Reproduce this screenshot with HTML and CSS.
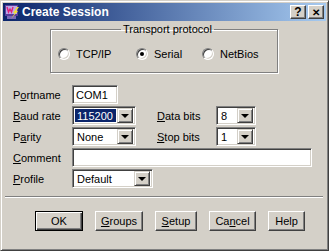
FILE: index.html
```html
<!DOCTYPE html>
<html lang="en">
<head>
    <meta charset="UTF-8">
    <title>Create Session</title>
    <link rel="stylesheet" href="styles.css">
</head>
<body>
    <div class="window">
        <div class="titlebar">
            <svg class="app-icon" width="16" height="16" viewBox="0 0 16 16">
                <rect x="1" y="1" width="13" height="11" fill="#5a3c9c"/>
                <rect x="2" y="2" width="11" height="8" fill="#b8a8e8"/>
                <polyline points="3,3 4.5,8 6,5 7.5,8 9,3" fill="none" stroke="#e0207a" stroke-width="1.4"/>
                <rect x="3" y="12" width="9" height="3" fill="#7868b8"/>
                <polygon points="13,3 9,9 11,9 7,15 14,7 12,7 15,3" fill="#f0e030"/>
            </svg>
            <span class="title">Create Session</span>
            <button class="cap-btn">?</button>
            <button class="cap-btn cap-close">&#x2715;</button>
        </div>
        <div class="client">
            <fieldset class="group">
                <legend>Transport protocol</legend>
                <div class="radios">
                    <label class="radio radio-tcp"><span class="radio-mark"></span>TCP/IP</label>
                    <label class="radio radio-serial"><span class="radio-mark checked"></span>Serial</label>
                    <label class="radio"><span class="radio-mark"></span>NetBios</label>
                </div>
            </fieldset>

            <div class="form">
                <span class="label">P<u>o</u>rtname</span>
                <div class="field span-3"><div class="edit edit-port">COM1</div></div>

                <span class="label"><u>B</u>aud rate</span>
                <div class="field">
                    <div class="combo combo-baud"><span class="combo-text selected">115200</span><span class="combo-arrow"></span></div>
                </div>
                <span class="label"><u>D</u>ata bits</span>
                <div class="field">
                    <div class="combo combo-small"><span class="combo-text">8</span><span class="combo-arrow"></span></div>
                </div>

                <span class="label">P<u>a</u>rity</span>
                <div class="field">
                    <div class="combo combo-baud"><span class="combo-text">None</span><span class="combo-arrow"></span></div>
                </div>
                <span class="label"><u>S</u>top bits</span>
                <div class="field">
                    <div class="combo combo-small"><span class="combo-text">1</span><span class="combo-arrow"></span></div>
                </div>

                <span class="label"><u>C</u>omment</span>
                <div class="field span-3"><div class="edit edit-wide"></div></div>

                <span class="label"><u>P</u>rofile</span>
                <div class="field span-3">
                    <div class="combo combo-profile"><span class="combo-text">Default</span><span class="combo-arrow"></span></div>
                </div>
            </div>

            <div class="separator"></div>

            <div class="buttons">
                <button class="btn btn-default btn-ok">OK</button>
                <button class="btn btn-groups"><u>G</u>roups</button>
                <button class="btn btn-setup"><u>S</u>etup</button>
                <button class="btn btn-cancel">Ca<u>n</u>cel</button>
                <button class="btn btn-help">Help</button>
            </div>
        </div>
    </div>
</body>
</html>
```

FILE: styles.css
```css
body {
    margin: 0;
    background: #D4D0C8;
    font-family: "Liberation Sans", Arial, sans-serif;
    font-size: 11px;
    color: #000;
}
.window {
    width: 329px;
    height: 251px;
    box-sizing: border-box;
    border: 1px solid;
    border-color: #D4D0C8 #404040 #404040 #D4D0C8;
    box-shadow: inset 1px 1px #fff, inset -1px -1px #808080;
    padding: 2px;
    display: flex;
    flex-direction: column;
}
.titlebar {
    height: 18px;
    flex-shrink: 0;
    display: flex;
    align-items: center;
    padding: 0 2px 0 1px;
    background: linear-gradient(to right, #0A246A, #A6CAF0);
}
.app-icon {
    margin-right: 2px;
}
.title {
    flex: 1;
    color: #fff;
    font-weight: bold;
    font-size: 12px;
}
.cap-btn {
    width: 16px;
    height: 14px;
    margin-left: 2px;
    padding: 0;
    box-sizing: border-box;
    background: #D4D0C8;
    border: 1px solid;
    border-color: #fff #404040 #404040 #fff;
    box-shadow: inset -1px -1px #808080;
    font-family: "Liberation Sans", Arial, sans-serif;
    font-weight: bold;
    font-size: 12px;
    line-height: 11px;
    color: #000;
}
.cap-close {
    font-size: 10px;
}
.client {
    flex: 1;
    display: flex;
    flex-direction: column;
}
.group {
    margin: 2px 0 0 47px;
    width: 228px;
    box-sizing: border-box;
    padding: 11px 0 12px 7px;
    border: 1px solid #808080;
    box-shadow: inset 1px 1px #fff, 1px 1px #fff;
}
.group legend {
    margin-left: 63px;
    padding: 0 2px;
    line-height: 13px;
}
.radios {
    display: flex;
    align-items: center;
    height: 13px;
}
.radio {
    display: flex;
    align-items: center;
}
.radio-tcp {
    width: 78px;
}
.radio-serial {
    width: 66px;
}
.radio-mark {
    width: 12px;
    height: 12px;
    box-sizing: border-box;
    margin-right: 6px;
    border-radius: 50%;
    background: #fff;
    border: 1px solid;
    border-color: #808080 #fff #fff #808080;
    box-shadow: inset 1px 1px #404040, inset -1px -1px #D4D0C8;
    display: flex;
    align-items: center;
    justify-content: center;
}
.radio-mark.checked::after {
    content: "";
    width: 4px;
    height: 4px;
    border-radius: 50%;
    background: #000;
}
.form {
    margin: 12px 0 0 10px;
    display: grid;
    grid-template-columns: 59px 85px 59px 96px;
    grid-auto-rows: 19px;
    row-gap: 2px;
}
.label {
    display: flex;
    align-items: center;
}
.field {
    display: flex;
    align-items: center;
}
.span-3 {
    grid-column: 2 / 5;
}
.edit, .combo {
    height: 19px;
    box-sizing: border-box;
    background: #fff;
    border: 1px solid;
    border-color: #808080 #fff #fff #808080;
    box-shadow: inset 1px 1px #404040, inset -1px -1px #D4D0C8;
    padding: 2px;
    display: flex;
    align-items: center;
}
.edit-port {
    width: 46px;
    padding-left: 3px;
}
.edit-wide {
    width: 240px;
}
.combo-baud {
    width: 64px;
}
.combo-small {
    width: 40px;
}
.combo-profile {
    width: 81px;
}
.combo-text {
    flex: 1;
    align-self: stretch;
    display: flex;
    align-items: center;
    padding-left: 2px;
}
.combo-text.selected {
    background: #0A246A;
    color: #fff;
    margin-right: 1px;
}
.combo-arrow {
    width: 16px;
    height: 15px;
    box-sizing: border-box;
    background: #D4D0C8;
    border: 1px solid;
    border-color: #D4D0C8 #404040 #404040 #D4D0C8;
    box-shadow: inset 1px 1px #fff, inset -1px -1px #808080;
    display: flex;
    align-items: center;
    justify-content: center;
}
.combo-arrow::after {
    content: "";
    border-left: 4px solid transparent;
    border-right: 4px solid transparent;
    border-top: 4px solid #000;
    margin-top: 1px;
}
.separator {
    margin: 8px 3px 0 2px;
    border-top: 1px solid #808080;
    border-bottom: 1px solid #fff;
}
.buttons {
    margin: 13px 0 0 32px;
    display: flex;
    gap: 12px;
}
.btn {
    height: 20px;
    padding: 0;
    box-sizing: border-box;
    background: #D4D0C8;
    border: 1px solid;
    border-color: #fff #404040 #404040 #fff;
    box-shadow: inset -1px -1px #808080;
    font-family: "Liberation Sans", Arial, sans-serif;
    font-size: 11px;
    color: #000;
}
.btn-default {
    border: 1px solid #000;
    box-shadow: inset 1px 1px #fff, inset -1px -1px #404040, inset -2px -2px #808080;
}
.btn-ok {
    width: 48px;
}
.btn-groups {
    width: 48px;
}
.btn-setup {
    width: 42px;
}
.btn-cancel {
    width: 47px;
}
.btn-help {
    width: 37px;
}
```
